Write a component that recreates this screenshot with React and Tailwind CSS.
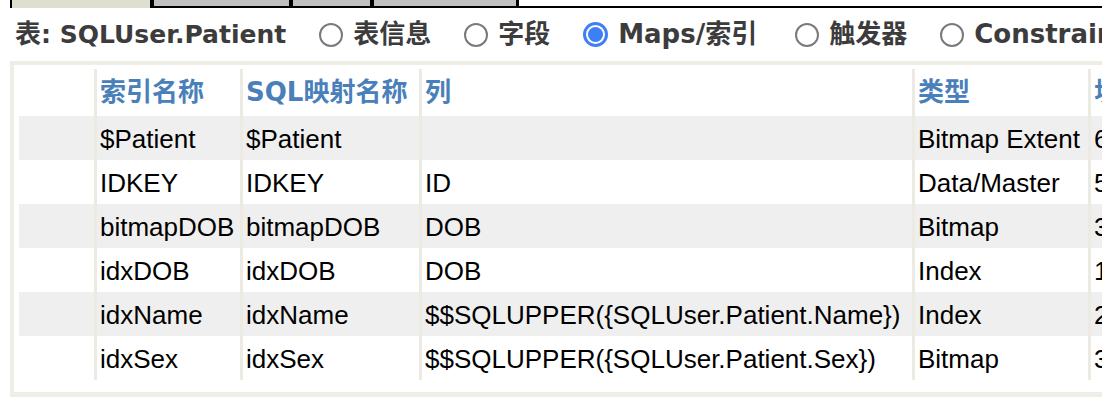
import React from "react";

const rows = [
  ["$Patient", "$Patient", "", "Bitmap Extent", "6"],
  ["IDKEY", "IDKEY", "ID", "Data/Master", "5"],
  ["bitmapDOB", "bitmapDOB", "DOB", "Bitmap", "3"],
  ["idxDOB", "idxDOB", "DOB", "Index", "1"],
  ["idxName", "idxName", "$$SQLUPPER({SQLUser.Patient.Name})", "Index", "2"],
  ["idxSex", "idxSex", "$$SQLUPPER({SQLUser.Patient.Sex})", "Bitmap", "3"],
];

const heads = ["索引名称", "SQL映射名称", "列", "类型", "块计数"];

const grid = "grid grid-cols-[75px_146px_179px_493px_176px_200px]";
const cell = "border-l-[3px] border-[#ecebe3] pl-[3px] flex items-center whitespace-nowrap";

function Radio({ label, checked }) {
  return (
    <div className="flex items-center gap-[10px] ml-[33px]">
      {checked ? (
        <div className="w-[25px] h-[25px] rounded-full border-[3px] border-[#3d7ff5] p-[2px] bg-white">
          <div className="w-full h-full rounded-full bg-[#3d7ff5]" />
        </div>
      ) : (
        <div className="w-[24px] h-[24px] rounded-full border-2 border-[#7a7a7a] bg-white" />
      )}
      <span className={`whitespace-nowrap text-[26px] ${checked ? "pr-[5px]" : ""}`}>{label}</span>
    </div>
  );
}

export default function App() {
  return (
    <div className="w-[1102px] h-[406px] overflow-hidden bg-white">
      {/* tabs */}
      <div className="flex h-[8px] pl-[10px]">
        <div className="w-[140px] border-l-2 border-black bg-[#dfdfd0]" />
        <div className="w-[4px] bg-black" />
        <div className="flex flex-1 border-b-2 border-black">
          <div className="w-[135px] bg-[#c0c0c0]" />
          <div className="w-[4px] bg-black" />
          <div className="w-[77px] bg-[#c0c0c0]" />
          <div className="w-[4px] bg-black" />
          <div className="w-[142px] bg-[#c0c0c0]" />
          <div className="w-[3px] bg-black" />
          <div className="flex-1" />
        </div>
      </div>

      {/* title + radios */}
      <div className="flex items-center h-[53px] pl-[15px] text-[#3c3c3c] text-[25px] font-bold font-['DejaVu_Sans','Noto_Sans_CJK_SC',sans-serif]">
        <div className="w-[273px] whitespace-nowrap">
          <span className="text-[26px]">表</span>: SQLUser.Patient
        </div>
        <Radio label="表信息" />
        <Radio label="字段" />
        <Radio label="Maps/索引" checked />
        <Radio label="触发器" />
        <Radio label="Constraints" />
      </div>

      {/* panel */}
      <div className="ml-[10px] w-[1300px] bg-[#eeeee6] pt-[4px] pl-[4px] pb-[5px]">
        <div className="bg-white pl-[5px] pt-[4px] pb-[12px]">
          <div className={`${grid} h-[47px] text-[26px] font-bold text-[#4a80ba] font-['DejaVu_Sans','Noto_Sans_CJK_SC',sans-serif]`}>
            <div />
            {heads.map((h) => (
              <div key={h} className={cell}>{h}</div>
            ))}
          </div>
          {rows.map((r, i) => (
            <div
              key={i}
              className={`${grid} h-[44px] text-[26px] text-black font-['Liberation_Sans',Arial,sans-serif] ${i % 2 === 0 ? "bg-[#efefef]" : "bg-white"}`}
            >
              <div />
              {r.map((c, j) => (
                <div key={j} className={`${cell} pt-[2px]`}>{c}</div>
              ))}
            </div>
          ))}
        </div>
      </div>
    </div>
  );
}
